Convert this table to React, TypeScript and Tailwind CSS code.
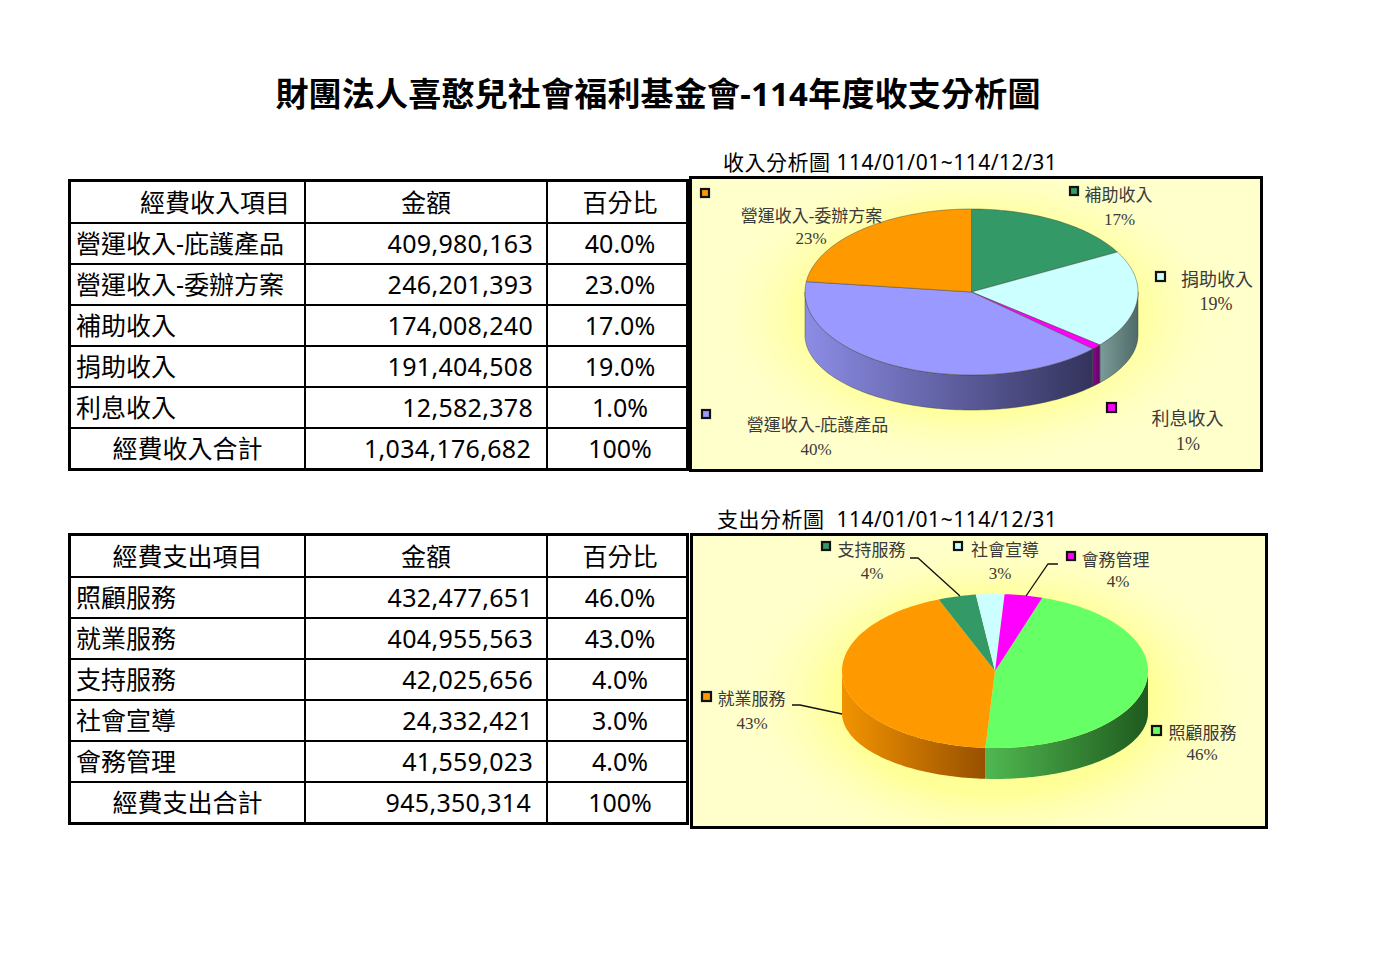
import React from "react";

type Slice = { a1: number; a2: number; fill: string; side?: [string, string] };

function P(cx: number, cy: number, rx: number, ry: number, d: number): [number, number] {
  const r = (d * Math.PI) / 180;
  return [cx + rx * Math.sin(r), cy - ry * Math.cos(r)];
}

function arc(cx: number, cy: number, rx: number, ry: number, a1: number, a2: number) {
  const n = Math.max(2, Math.ceil(Math.abs(a2 - a1) / 1.5));
  const pts: [number, number][] = [];
  for (let i = 0; i <= n; i++) pts.push(P(cx, cy, rx, ry, a1 + ((a2 - a1) * i) / n));
  return pts;
}

const fmt = (p: [number, number][]) => p.map(([x, y]) => `${x.toFixed(2)},${y.toFixed(2)}`).join(" L ");

function Pie({
  id,
  cx,
  cy,
  rx,
  ry,
  cyb,
  ryb,
  slices,
  stroke,
}: {
  id: string;
  cx: number;
  cy: number;
  rx: number;
  ry: number;
  cyb: number;
  ryb: number;
  slices: Slice[];
  stroke?: string;
}) {
  return (
    <g>
      <defs>
        {slices.map((s, i) =>
          s.side ? (
            <linearGradient key={i} id={`${id}-g${i}`} x1="0" y1="0" x2="1" y2="0">
              <stop offset="0" stopColor={s.side[0]} />
              <stop offset="1" stopColor={s.side[1]} />
            </linearGradient>
          ) : null
        )}
      </defs>
      {slices.map((s, i) => {
        const st = Math.max(s.a1, 90);
        const en = Math.min(s.a2, 270);
        if (!s.side || st >= en) return null;
        const d = `M ${fmt(arc(cx, cy, rx, ry, st, en))} L ${fmt(arc(cx, cyb, rx, ryb, en, st))} Z`;
        return (
          <path
            key={`s${i}`}
            d={d}
            fill={`url(#${id}-g${i})`}
            stroke={stroke ?? "none"}
            strokeWidth={0.7}
            strokeOpacity={0.6}
          />
        );
      })}
      {slices.map((s, i) => {
        const d = `M ${cx},${cy} L ${fmt(arc(cx, cy, rx, ry, s.a1, s.a2))} Z`;
        return (
          <path key={`t${i}`} d={d} fill={s.fill} stroke={stroke ?? "none"} strokeWidth={0.7} strokeOpacity={0.6} />
        );
      })}
    </g>
  );
}

function Label({
  x,
  y,
  text,
  pct,
  px,
  py,
  size = 17,
  sq,
  color,
}: {
  x: number;
  y: number;
  text: string;
  pct: string;
  px: number;
  py: number;
  size?: number;
  sq: [number, number, number];
  color: string;
}) {
  return (
    <g>
      <rect x={sq[0]} y={sq[1]} width={sq[2]} height={sq[2]} fill={color} stroke="#111" strokeWidth={2.2} />
      <text x={x} y={y + size * 0.36} textAnchor="middle" fontSize={size} fill="#3a3a3a">
        {text}
      </text>
      <text x={px} y={py + size * 0.34} textAnchor="middle" fontSize={size} fill="#3a3a3a">
        {pct}
      </text>
    </g>
  );
}

const labelFont = '"Liberation Serif","Noto Sans CJK TC",serif';

function Glow({ id, cx, cy, rx, ry }: { id: string; cx: number; cy: number; rx: number; ry: number }) {
  return (
    <>
      <defs>
        <radialGradient id={id} cx="0.5" cy="0.5" r="0.5">
          <stop offset="0" stopColor="#ffff80" stopOpacity="1" />
          <stop offset="0.6" stopColor="#ffff90" stopOpacity="0.85" />
          <stop offset="1" stopColor="#ffffcc" stopOpacity="0" />
        </radialGradient>
      </defs>
      <ellipse cx={cx} cy={cy} rx={rx} ry={ry} fill={`url(#${id})`} />
    </>
  );
}

function IncomeChart() {
  const cx = 279.5,
    cy = 113;
  const slices: Slice[] = [
    { a1: 0, a2: 61.2, fill: "#339966" },
    { a1: 61.2, a2: 129.6, fill: "#ccffff", side: ["#7b9c9a", "#4f6a68"] },
    { a1: 129.6, a2: 133.2, fill: "#ff00ff", side: ["#8a0a8a", "#660066"] },
    { a1: 133.2, a2: 277.2, fill: "#9999ff", side: ["#8c8ce6", "#33335c"] },
    { a1: 277.2, a2: 360, fill: "#ff9900" },
  ];
  return (
    <svg width="568" height="290" className="block" fontFamily={labelFont}>
      <Glow id="glow1" cx={cx} cy={135} rx={270} ry={160} />
      <Pie id="p1" cx={cx} cy={cy} rx={166.5} ry={83} cyb={156} ryb={75} slices={slices} stroke="#3a3a3a" />
      <Label x={119.5} y={37} text="營運收入-委辦方案" pct="23%" px={119} py={59} sq={[9, 10, 8]} color="#ff9900" />
      <Label x={426.5} y={15.7} text="補助收入" pct="17%" px={427.5} py={40.6} sq={[378, 8, 8]} color="#339966" />
      <Label x={525} y={100.6} text="捐助收入" pct="19%" px={524} py={124.5} size={18} sq={[464, 93, 9]} color="#ccffff" />
      <Label x={495.5} y={240} text="利息收入" pct="1%" px={496} py={265} size={18} sq={[415, 224, 9]} color="#ff00ff" />
      <Label x={125.5} y={246} text="營運收入-庇護產品" pct="40%" px={124} py={270} sq={[10, 231, 8]} color="#9999ff" />
    </svg>
  );
}

function ExpenseChart() {
  const cx = 302,
    cy = 135;
  const slices: Slice[] = [
    { a1: 18, a2: 183.6, fill: "#66ff66", side: ["#50b850", "#1f5a1f"] },
    { a1: 183.6, a2: 338.4, fill: "#ff9900", side: ["#f29300", "#985000"] },
    { a1: 338.4, a2: 352.8, fill: "#339966" },
    { a1: 352.8, a2: 363.6, fill: "#ccffff" },
    { a1: 363.6, a2: 378, fill: "#ff00ff" },
  ];
  return (
    <svg width="572" height="290" className="block" fontFamily={labelFont}>
      <Glow id="glow2" cx={cx} cy={160} rx={265} ry={165} />
      <Pie id="p2" cx={cx} cy={cy} rx={153} ry={77} cyb={177} ryb={66} slices={slices} />
      <polyline points="217,22 225,22 267,60" fill="none" stroke="#111" strokeWidth={1.3} />
      <polyline points="365,28 355,28 333,60" fill="none" stroke="#111" strokeWidth={1.3} />
      <polyline points="99,169 107,169 149,178" fill="none" stroke="#111" strokeWidth={1.3} />
      <Label x={178.5} y={14} text="支持服務" pct="4%" px={179} py={37} sq={[129, 6, 8]} color="#339966" />
      <Label x={312} y={14} text="社會宣導" pct="3%" px={307} py={37} sq={[261, 6, 8]} color="#ccffff" />
      <Label x={422.5} y={24} text="會務管理" pct="4%" px={425} py={45} sq={[374, 16, 8]} color="#ff00ff" />
      <Label x={58.5} y={163} text="就業服務" pct="43%" px={59} py={187} sq={[9, 156, 9]} color="#ff9900" />
      <Label x={509.5} y={197} text="照顧服務" pct="46%" px={509} py={218} sq={[459, 190, 9]} color="#66ff66" />
    </svg>
  );
}

type Row = [string, string, string];

function DataTable({ head, headRight, rows, total, totalAmt }: { head: string; headRight?: boolean; rows: Row[]; total: string; totalAmt: string }) {
  return (
    <div className="w-[621px] h-[292px] border-[3px] border-black flex flex-col text-[25px] leading-none text-black">
      <div className="h-[40px] flex">
        <div className={headRight ? "w-[233px] flex items-center justify-end pr-[14px]" : "w-[233px] flex items-center justify-center"}>
          {head}
        </div>
        <div className="w-[242px] border-l-2 border-black flex items-center justify-center">金額</div>
        <div className="flex-1 border-l-2 border-black flex items-center justify-center pl-[6px]">百分比</div>
      </div>
      {rows.map((r) => (
        <div key={r[0]} className="h-[41px] flex border-t-2 border-black">
          <div className="w-[233px] flex items-center pl-[5px]">{r[0]}</div>
          <div className="w-[242px] border-l-2 border-black flex items-center justify-end pr-[13px] tracking-[0.3px]">{r[1]}</div>
          <div className="flex-1 border-l-2 border-black flex items-center justify-center pl-[6px]">{r[2]}</div>
        </div>
      ))}
      <div className="h-[41px] flex border-t-2 border-black">
        <div className="w-[233px] flex items-center justify-center">{total}</div>
        <div className="w-[242px] border-l-2 border-black flex items-center justify-end pr-[15px] tracking-[0.3px]">{totalAmt}</div>
        <div className="flex-1 border-l-2 border-black flex items-center justify-center pl-[6px]">100%</div>
      </div>
    </div>
  );
}

const incomeRows: Row[] = [
  ["營運收入-庇護產品", "409,980,163", "40.0%"],
  ["營運收入-委辦方案", "246,201,393", "23.0%"],
  ["補助收入", "174,008,240", "17.0%"],
  ["捐助收入", "191,404,508", "19.0%"],
  ["利息收入", "12,582,378", "1.0%"],
];

const expenseRows: Row[] = [
  ["照顧服務", "432,477,651", "46.0%"],
  ["就業服務", "404,955,563", "43.0%"],
  ["支持服務", "42,025,656", "4.0%"],
  ["社會宣導", "24,332,421", "3.0%"],
  ["會務管理", "41,559,023", "4.0%"],
];

export default function App() {
  return (
    <div className="w-[1391px] h-[955px] bg-white overflow-hidden text-black font-['Noto_Sans','Noto_Sans_CJK_TC',sans-serif]">
      <h1 className="pt-[74px] pr-[75px] text-center text-[33px] font-bold leading-[40px] tracking-[0.2px]">
        財團法人喜憨兒社會福利基金會-114年度收支分析圖
      </h1>

      <section className="mt-[34px] pl-[68px] flex items-start">
        <div className="mt-[31px]">
          <DataTable head="經費收入項目" headRight rows={incomeRows} total="經費收入合計" totalAmt="1,034,176,682" />
        </div>
        <div className="flex flex-col">
          <div className="h-[28px] pl-[34px] text-[21px] leading-[28px] tracking-[0.5px] whitespace-pre">收入分析圖 114/01/01~114/12/31</div>
          <div className="w-[574px] h-[296px] border-[3px] border-black bg-[#ffffcc]">
            <IncomeChart />
          </div>
        </div>
      </section>

      <section className="mt-[33px] pl-[68px] flex items-start">
        <div className="mt-[28px]">
          <DataTable head="經費支出項目" rows={expenseRows} total="經費支出合計" totalAmt="945,350,314" />
        </div>
        <div className="flex flex-col ml-px">
          <div className="h-[28px] pl-[27px] text-[21px] leading-[28px] tracking-[0.5px] whitespace-pre">支出分析圖  114/01/01~114/12/31</div>
          <div className="w-[578px] h-[296px] border-[3px] border-black bg-[#ffffcc]">
            <ExpenseChart />
          </div>
        </div>
      </section>
    </div>
  );
}
